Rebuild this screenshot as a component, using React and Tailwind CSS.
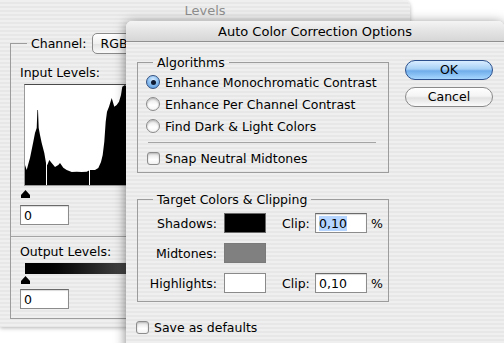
const stripes =
  'bg-[repeating-linear-gradient(to_bottom,#efefef_0px,#efefef_2px,#e7e7e7_2px,#e7e7e7_4px)]'

function Slider() {
  return (
    <svg width="9" height="8" viewBox="0 0 9 8" className="block">
      <path d="M4.5 0 L9 5 L9 8 L0 8 L0 5 Z" fill="#000" />
    </svg>
  )
}

function Radio({ checked }) {
  if (checked) {
    return (
      <span className="w-[14px] h-[14px] rounded-full border border-[#34507f] bg-[radial-gradient(circle_at_50%_30%,#d8ecff_0%,#8fc2f2_45%,#4d8fd6_100%)] flex items-center justify-center shrink-0">
        <span className="w-[5px] h-[5px] rounded-full bg-[#0f1b33]" />
      </span>
    )
  }
  return (
    <span className="w-[14px] h-[14px] rounded-full border border-[#8a8a8a] bg-[linear-gradient(to_bottom,#e6e6e6,#ffffff_60%,#f4f4f4)] shadow-[inset_0_1px_2px_rgba(0,0,0,0.25)] shrink-0" />
  )
}

function Check() {
  return (
    <span className="w-[13px] h-[13px] rounded-[3px] border border-[#8c8c8c] bg-[linear-gradient(to_bottom,#e2e2e2,#ffffff_60%,#f2f2f2)] shadow-[inset_0_1px_2px_rgba(0,0,0,0.2)] shrink-0" />
  )
}

function Field({ children, w, selected }) {
  return (
    <div
      className={`h-[20px] bg-white border border-[#8c8c8c] border-t-[#6a6a6a] shadow-[inset_0_1px_1px_rgba(0,0,0,0.15)] flex items-center pl-[3px] ${w}`}
    >
      {selected ? <span className="bg-[#b5d5ff] leading-[15px]">{children}</span> : children}
    </div>
  )
}

function ColorRow({ label, swatch, clip }) {
  return (
    <div className="h-[20px] flex items-center">
      <span className="w-[79px] text-right">{label}</span>
      <span className={`ml-[7px] w-[42px] h-[20px] border ${swatch}`} />
      {clip && (
        <>
          <span className="ml-[16px] w-[33px]">Clip:</span>
          <Field w="w-[52px]" selected={clip.selected}>{clip.value}</Field>
          <span className="ml-[4px]">%</span>
        </>
      )}
    </div>
  )
}

export default function App() {
  return (
    <div className="relative w-[504px] h-[343px] bg-white overflow-hidden font-['DejaVu_Sans',sans-serif] text-[12.5px] text-black leading-[17px]">
      {/* Levels window (behind) */}
      <div className={`absolute left-0 top-0 w-[410px] h-[327px] rounded-tr-[7px] flex flex-col ${stripes} shadow-[0_1px_4px_rgba(0,0,0,0.3)]`}>
        <div className="h-[21px] flex items-center justify-center text-[13px] text-[#8e8e8e]">Levels</div>
        <div className="px-[10px] pt-[12px]">
          <fieldset className="border border-[#9c9c9c] pl-[9px] pb-[9px]">
            <legend className="ml-[7px] px-[4px]">
              <div className="flex items-center">
                <span>Channel:</span>
                <div className="ml-[5px] w-[110px] h-[21px] rounded-[5px] border border-[#8a8a8a] bg-[linear-gradient(to_bottom,#ffffff,#f0f0f0_50%,#e2e2e2_51%,#fafafa)] flex items-center pl-[8px]">
                  RGB
                </div>
              </div>
            </legend>
            <div className="mt-[10px]">Input Levels:</div>
            <div className="mt-[3px] ml-[4px] w-[258px] h-[102px] border border-[#9a9a9a] border-t-[#4a4a4a] bg-white">
              <svg width="256" height="100" viewBox="0 0 256 100" className="block">
                <path
                  fill="#000"
                  d="M0 80 L1.7 85 L3.3 79 L5 73 L8.3 56.7 L10 48 L11.7 43 L12.4 25 L13 25 L13.7 43 L15 50 L16.7 58 L19.3 68 L21 78 L22.3 80 L24.3 75 L26.7 78 L30 82 L33.3 80 L35 78 L38.3 82.7 L41.7 85 L46.7 87 L51.7 86.7 L56.7 87 L61.7 86.7 L65 85 L70 85 L73.3 83 L76 77 L77.7 70 L79.3 56.7 L80.7 36.7 L82 26.7 L84 21.7 L86.7 13 L89.3 21.7 L91.7 20 L94 16.7 L96 10 L97.3 1.7 L100 0 L104 4 L110 15 L120 40 L140 70 L160 85 L200 95 L256 98 L256 100 L0 100 Z"
                />
                <rect x="21" y="0" width="1" height="100" fill="#fff" />
                <rect x="64" y="0" width="1" height="100" fill="#fff" />
              </svg>
            </div>
            <div className="mt-[4px] ml-[1px]">
              <Slider />
            </div>
            <div className="mt-[7px]">
              <Field w="w-[49px]">0</Field>
            </div>
            <div className="mt-[11px] -ml-[9px] h-px bg-[#a4a4a4]" />
            <div className="mt-[6px]">Output Levels:</div>
            <div className="mt-[3px] ml-[5px] w-[256px] h-[11px] bg-gradient-to-r from-black to-white" />
            <div className="mt-[2px] ml-[1px]">
              <Slider />
            </div>
            <div className="mt-[5px]">
              <Field w="w-[49px]">0</Field>
            </div>
          </fieldset>
        </div>
      </div>

      {/* Auto Color Correction Options dialog (front) */}
      <div className={`absolute left-[126px] top-[21px] w-[378px] h-[330px] rounded-t-[6px] overflow-hidden flex flex-col ${stripes} shadow-[0_2px_12px_rgba(0,0,0,0.5)]`}>
        <div className="h-[21px] shrink-0 flex items-center justify-center text-[13px] border-b border-[#8f8f8f] bg-[linear-gradient(to_bottom,#f4f4f4,#e4e4e4_50%,#d6d6d6)]">
          Auto Color Correction Options
        </div>
        <div className="flex pl-[11px]">
          <div className="w-[252px] pt-[12px]">
            <fieldset className="border border-[#9c9c9c] pb-[3px]">
              <legend className="ml-[15px] px-[4px]">Algorithms</legend>
              {[
                ['Enhance Monochromatic Contrast', true],
                ['Enhance Per Channel Contrast', false],
                ['Find Dark & Light Colors', false],
              ].map(([label, on]) => (
                <div key={label} className="h-[22px] flex items-center pl-[8px] gap-[5px] whitespace-nowrap">
                  <Radio checked={on} />
                  <span>{label}</span>
                </div>
              ))}
              <div className="mt-[5px] ml-[10px] mr-[12px] h-px bg-[#a4a4a4]" />
              <div className="mt-[4px] h-[22px] flex items-center pl-[9px] gap-[5px]">
                <Check />
                <span>Snap Neutral Midtones</span>
              </div>
            </fieldset>

            <fieldset className="mt-[18px] border border-[#9c9c9c] pb-[8px]">
              <legend className="ml-[15px] px-[4px]">Target Colors &amp; Clipping</legend>
              <div className="mt-[5px] flex flex-col gap-[10px]">
                <ColorRow label="Shadows:" swatch="bg-black border-[#6a6a6a]" clip={{ value: '0,10', selected: true }} />
                <ColorRow label="Midtones:" swatch="bg-[#808080] border-[#7a7a7a]" />
                <ColorRow label="Highlights:" swatch="bg-white border-[#8a8a8a]" clip={{ value: '0,10' }} />
              </div>
            </fieldset>

            <div className="mt-[14px] -ml-[1px] h-[22px] flex items-center gap-[5px]">
              <Check />
              <span>Save as defaults</span>
            </div>
          </div>

          <div className="ml-[16px] w-[88px] pt-[18px] flex flex-col gap-[7px]">
            <button className="h-[20px] rounded-full border border-[#2b4f8c] bg-[linear-gradient(to_bottom,#d9edff_0%,#a6d0f6_45%,#6fadea_55%,#a8d7ff_100%)] flex items-center justify-center leading-none">
              OK
            </button>
            <button className="h-[20px] rounded-full border border-[#8a8a8a] bg-[linear-gradient(to_bottom,#ffffff_0%,#f4f4f4_45%,#e2e2e2_55%,#fbfbfb_100%)] flex items-center justify-center leading-none">
              Cancel
            </button>
          </div>
        </div>
      </div>
    </div>
  )
}
